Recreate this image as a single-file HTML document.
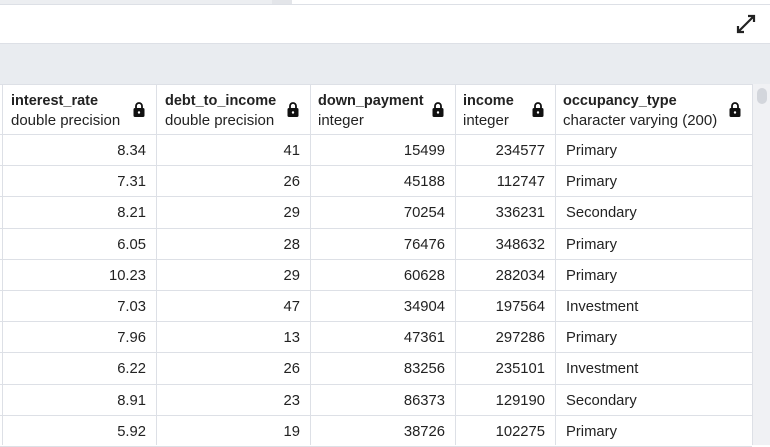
<!DOCTYPE html>
<html><head><meta charset="utf-8"><style>
*{margin:0;padding:0;box-sizing:border-box}
body{width:770px;height:445px;overflow:hidden;background:#fff;font-family:"Liberation Sans",sans-serif;color:#222;position:relative}
.a{position:absolute}
.hl{position:absolute;left:0;width:752px;height:1px;background:#dde0e6}
.vl{position:absolute;top:84px;width:1px;height:361px;background:#dde0e6}
.c{position:absolute;font-size:14.8px;line-height:16px}
.h{position:absolute;top:92px;font-size:15px;line-height:19px}
.h b{display:block;font-weight:bold;color:#222;font-size:14.5px}
.lock{position:absolute;top:102px}
</style></head><body>
<div class="a" style="left:0;top:0;width:272px;height:4px;background:#eceef1"></div>
<div class="a" style="left:272px;top:0;width:20px;height:4px;background:#e3e5e9"></div>
<div class="a" style="left:0;top:4px;width:770px;height:1px;background:#dde0e6"></div>
<div class="a" style="left:0;top:43px;width:770px;height:1px;background:#dde0e6"></div>
<div class="a" style="left:0;top:44px;width:770px;height:40px;background:#e9ecf0"></div>
<div class="a" style="left:752px;top:84px;width:18px;height:361px;background:#f0f1f4"></div>
<div class="a" style="left:757px;top:88px;width:10px;height:16px;border-radius:5px;background:#d3d6dc"></div>
<svg class="a" style="left:736px;top:14px" width="20" height="20" viewBox="0 0 20 20"><path d="M12 2h6v6M18 2L2 18M2 12v6h6" stroke="#222" stroke-width="2.2" fill="none"/></svg>
<div class="hl" style="top:84px"></div>
<div class="hl" style="top:134px"></div>
<div class="vl" style="left:2px"></div><div class="vl" style="left:156px"></div><div class="vl" style="left:310px"></div><div class="vl" style="left:455px"></div><div class="vl" style="left:555px"></div><div class="vl" style="left:752px"></div>
<div class="h" style="left:11px"><b>interest_rate</b>double precision</div>
<div class="h" style="left:165px"><b>debt_to_income</b>double precision</div>
<div class="h" style="left:318px"><b>down_payment</b>integer</div>
<div class="h" style="left:463px"><b>income</b>integer</div>
<div class="h" style="left:563px"><b>occupancy_type</b>character varying (200)</div>
<svg class="lock" style="left:133px" width="12" height="15" viewBox="0 0 12 15"><path d="M3 6V4a3 3 0 0 1 6 0v2" stroke="#111" stroke-width="1.8" fill="none"/><rect x="0.5" y="6" width="11" height="9" rx="1.5" fill="#111"/><circle cx="6" cy="10.5" r="1.2" fill="#fff"/></svg>
<svg class="lock" style="left:287px" width="12" height="15" viewBox="0 0 12 15"><path d="M3 6V4a3 3 0 0 1 6 0v2" stroke="#111" stroke-width="1.8" fill="none"/><rect x="0.5" y="6" width="11" height="9" rx="1.5" fill="#111"/><circle cx="6" cy="10.5" r="1.2" fill="#fff"/></svg>
<svg class="lock" style="left:432px" width="12" height="15" viewBox="0 0 12 15"><path d="M3 6V4a3 3 0 0 1 6 0v2" stroke="#111" stroke-width="1.8" fill="none"/><rect x="0.5" y="6" width="11" height="9" rx="1.5" fill="#111"/><circle cx="6" cy="10.5" r="1.2" fill="#fff"/></svg>
<svg class="lock" style="left:532px" width="12" height="15" viewBox="0 0 12 15"><path d="M3 6V4a3 3 0 0 1 6 0v2" stroke="#111" stroke-width="1.8" fill="none"/><rect x="0.5" y="6" width="11" height="9" rx="1.5" fill="#111"/><circle cx="6" cy="10.5" r="1.2" fill="#fff"/></svg>
<svg class="lock" style="left:729px" width="12" height="15" viewBox="0 0 12 15"><path d="M3 6V4a3 3 0 0 1 6 0v2" stroke="#111" stroke-width="1.8" fill="none"/><rect x="0.5" y="6" width="11" height="9" rx="1.5" fill="#111"/><circle cx="6" cy="10.5" r="1.2" fill="#fff"/></svg>
<div id="rows"></div>
<script>
var d=[["8.34",41,15499,234577,"Primary"],["7.31",26,45188,112747,"Primary"],["8.21",29,70254,336231,"Secondary"],["6.05",28,76476,348632,"Primary"],["10.23",29,60628,282034,"Primary"],["7.03",47,34904,197564,"Investment"],["7.96",13,47361,297286,"Primary"],["6.22",26,83256,235101,"Investment"],["8.91",23,86373,129190,"Secondary"],["5.92",19,38726,102275,"Primary"]];
var h="";
for(var i=0;i<d.length;i++){var t=134+i*31.2;var y=t+9;
h+='<div class="hl" style="top:'+(t+31.2).toFixed(1)+'px"></div>';
h+='<div class="c" style="top:'+y+'px;right:'+(770-146)+'px">'+d[i][0]+'</div>';
h+='<div class="c" style="top:'+y+'px;right:'+(770-300)+'px">'+d[i][1]+'</div>';
h+='<div class="c" style="top:'+y+'px;right:'+(770-445)+'px">'+d[i][2]+'</div>';
h+='<div class="c" style="top:'+y+'px;right:'+(770-545)+'px">'+d[i][3]+'</div>';
h+='<div class="c" style="top:'+y+'px;left:566px">'+d[i][4]+'</div>';}
document.getElementById("rows").innerHTML=h;
</script>
</body></html>
